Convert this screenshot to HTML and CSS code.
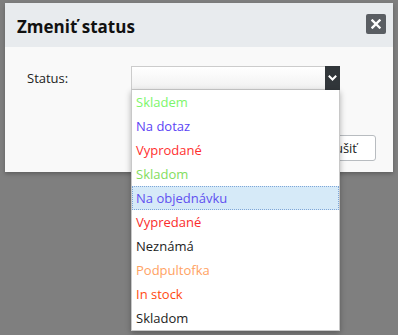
FILE: index.html
```html
<!DOCTYPE html>
<html>
<head>
<meta charset="utf-8">
<link rel="stylesheet" href="styles.css">
</head>
<body>
<div class="dialog">
  <div class="dialog-header">
    <h1 class="dialog-title">Zmeniť status</h1>
    <button class="close-btn" aria-label="close">
      <svg width="10" height="10" viewBox="0 0 10 10"><path d="M1.5 1.5 L8.5 8.5 M8.5 1.5 L1.5 8.5" stroke="#fff" stroke-width="2.4" stroke-linecap="square"/></svg>
    </button>
  </div>
  <div class="dialog-body">
    <div class="form-row">
      <label class="form-label">Status:</label>
      <div class="select-wrap">
        <div class="select">
          <span class="select-value"></span>
          <span class="select-arrow">
            <svg width="9" height="6" viewBox="0 0 9 6"><path d="M0.8 0.8 L4.5 4.5 L8.2 0.8" stroke="#fff" stroke-width="2" fill="none"/></svg>
          </span>
        </div>
        <ul class="dropdown">
          <li class="opt c-green">Skladem</li>
          <li class="opt c-blue">Na dotaz</li>
          <li class="opt c-red">Vyprodané</li>
          <li class="opt c-green2">Skladom</li>
          <li class="opt c-blue2 active">Na objednávku</li>
          <li class="opt c-red2">Vypredané</li>
          <li class="opt c-black">Neznámá</li>
          <li class="opt c-orange">Podpultofka</li>
          <li class="opt c-instock">In stock</li>
          <li class="opt c-black">Skladom</li>
        </ul>
      </div>
    </div>
    <div class="actions">
      <button class="btn">Zrušiť</button>
    </div>
  </div>
</div>
</body>
</html>
```
FILE: styles.css
```css
html, body {
  margin: 0;
  padding: 0;
}
body {
  background: #7f7f7f;
  font-family: "Open Sans", "DejaVu Sans", sans-serif;
  width: 398px;
  height: 335px;
  overflow: hidden;
}
.dialog {
  margin: 3px 0 0 5px;
  width: 388px;
  background: #f9f9f9;
  box-shadow: 0 2px 4px rgba(0,0,0,0.25);
}
.dialog-header {
  height: 44px;
  background: #e8ebee;
  display: flex;
  align-items: center;
  justify-content: space-between;
  padding: 0 7px 0 12px;
  box-sizing: border-box;
}
.dialog-title {
  margin: 0;
  font-size: 17px;
  font-weight: 700;
  color: #111;
  line-height: 1;
  position: relative;
  top: 1px;
}
.close-btn {
  width: 20px;
  height: 20px;
  border: 0;
  border-radius: 2px;
  background: #5a5e63;
  display: flex;
  align-items: center;
  justify-content: center;
  padding: 0;
  position: relative;
  top: -1px;
}
.dialog-body {
  height: 125px;
  box-sizing: border-box;
  padding: 19px 17px 0 22px;
}
.form-row {
  display: flex;
  align-items: flex-start;
}
.form-label {
  width: 104px;
  font-size: 13px;
  color: #222;
  line-height: 24px;
}
.select-wrap {
  position: relative;
  width: 209px;
}
.select {
  height: 24px;
  box-sizing: border-box;
  border: 1px solid #ccc;
  border-right: 0;
  background: linear-gradient(#ffffff, #f1f1f1);
  display: flex;
  justify-content: flex-end;
}
.select-arrow {
  width: 15px;
  margin-top: -1px;
  height: 24px;
  background: #31363a;
  display: flex;
  align-items: center;
  justify-content: center;
}
.dropdown {
  position: absolute;
  left: 0;
  top: 24px;
  width: 209px;
  box-sizing: border-box;
  margin: 0;
  padding: 0;
  list-style: none;
  background: #fff;
  border: 1px solid #c8c8c8;
  border-top: 0;
  box-shadow: 0 2px 6px rgba(0,0,0,0.3);
  z-index: 2;
}
.opt {
  height: 24px;
  line-height: 24px;
  font-size: 13px;
  padding-left: 4px;
  box-sizing: border-box;
  white-space: nowrap;
}
.opt.active {
  background: #d6eaf8;
  outline: 1px dotted #7ea6d8;
  outline-offset: -1px;
}
.c-green { color: #7cf56b; }
.c-blue { color: #5b44f5; }
.c-red { color: #ff2f2f; }
.c-green2 { color: #82dd5e; }
.c-blue2 { color: #5f50f0; }
.c-red2 { color: #fa2d2d; }
.c-black { color: #222; }
.c-orange { color: #ffa263; }
.c-instock { color: #ff4a10; }
.actions {
  display: flex;
  justify-content: flex-end;
  margin-top: 45px;
}
.btn {
  height: 26px;
  padding: 0 18px 0 24px;
  border: 1px solid #b8bcc0;
  border-radius: 3px;
  background: #fff;
  font-family: "Open Sans", "DejaVu Sans", sans-serif;
  font-size: 13px;
  color: #222;
}
```
